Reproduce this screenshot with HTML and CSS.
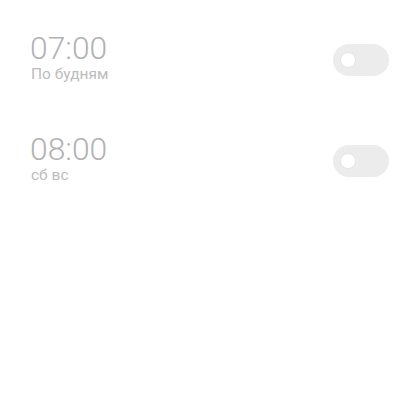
FILE: index.html
```html
<!DOCTYPE html>
<html lang="ru">
<head>
<meta charset="utf-8">
<link rel="stylesheet" href="styles.css">
</head>
<body>
<div class="list">
  <div class="alarm">
    <div class="info">
      <div class="time">07:00</div>
      <div class="days">По будням</div>
    </div>
    <div class="toggle"><span class="knob"></span></div>
  </div>
  <div class="alarm">
    <div class="info">
      <div class="time">08:00</div>
      <div class="days">сб вс</div>
    </div>
    <div class="toggle"><span class="knob"></span></div>
  </div>
</div>
</body>
</html>
```
FILE: styles.css
```css
html, body {
  margin: 0;
  padding: 0;
  background: #ffffff;
  width: 420px;
  height: 420px;
  overflow: hidden;
}
body {
  font-family: Roboto, "Noto Sans", sans-serif;
}
.list {
  display: flex;
  flex-direction: column;
  padding: 32.4px 31px 0 31px;
}
.alarm {
  display: flex;
  justify-content: space-between;
  align-items: flex-start;
  height: 101px;
}
.info {
  display: flex;
  flex-direction: column;
}
.time {
  font-size: 31.8px;
  font-weight: 300;
  line-height: 32px;
  color: #b2b2b2;
  margin-left: -1px;
}
.days {
  font-size: 15.5px;
  line-height: 18px;
  margin-top: 0.3px;
  color: #bcbcbc;
}
.toggle {
  margin-top: 11.6px;
  width: 56px;
  height: 32px;
  border-radius: 16px;
  background: #ececec;
  display: flex;
  align-items: center;
  padding-left: 7px;
  box-sizing: border-box;
}
.knob {
  width: 16px;
  height: 16px;
  border-radius: 50%;
  background: #ffffff;
  box-sizing: border-box;
  border: 1px solid #e4e4e4;
}
```
